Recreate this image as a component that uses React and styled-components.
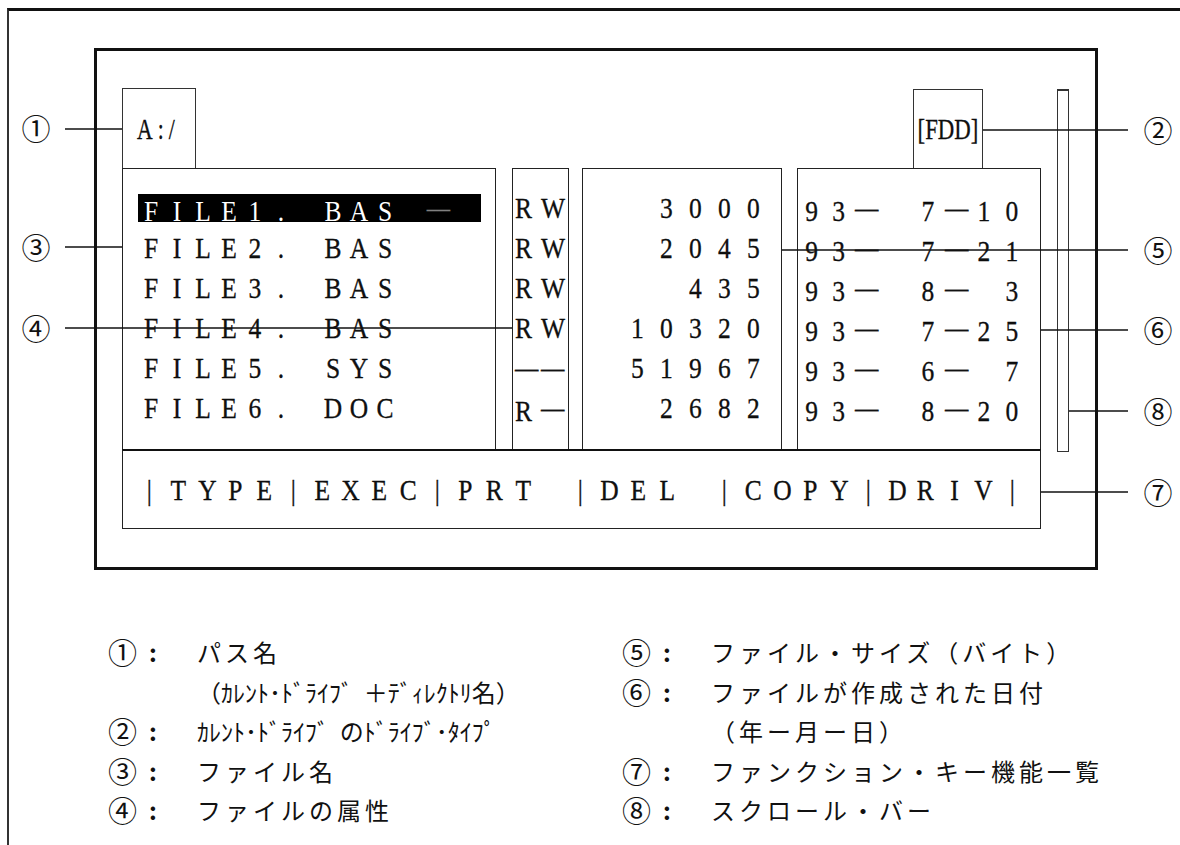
import React from 'react';
import styled, { createGlobalStyle } from 'styled-components';

const GlobalStyle = createGlobalStyle`
  html, body {
    margin: 0;
    padding: 0;
    background: #fff;
  }
  body {
    font-family: "Liberation Serif", "Times New Roman", serif;
    color: #111;
  }
`;

const Page = styled.div`
  position: relative;
  width: 1180px;
  height: 845px;
  overflow: hidden;
  background: #fff;
`;

const Frame = styled.div`
  box-sizing: border-box;
  margin: 8px 0 0 7px;
  height: 837px;
  border-top: 3px solid #111;
  border-left: 2px solid #333;
  padding: 37px 0 0 85px;
`;

const Screen = styled.div`
  box-sizing: border-box;
  width: 1004px;
  height: 522px;
  border: 3px solid #111;
  padding: 37px 0 0 25px;
  display: grid;
  grid-template-columns: 919px 12px;
  column-gap: 16px;
  align-items: start;
  -webkit-text-stroke: 0.3px #000;
`;

const Main = styled.div`
  display: flex;
  flex-direction: column;
`;

const TabRow = styled.div`
  display: flex;
  justify-content: space-between;
  align-items: flex-end;
  height: 80px;
  padding-right: 58px;
`;

const Tab = styled.div`
  box-sizing: border-box;
  width: ${(p) => p.$w}px;
  height: ${(p) => p.$h}px;
  border: 1px solid #333;
  border-bottom: none;
  display: flex;
  align-items: center;
  justify-content: ${(p) => (p.$center ? 'center' : 'flex-start')};
  padding-left: ${(p) => (p.$center ? 0 : 14)}px;
`;

const Condensed = styled.span`
  display: inline-block;
  font-size: 30px;
  line-height: 1;
  letter-spacing: ${(p) => p.$spacing || 0}px;
  transform: scaleX(${(p) => p.$scale});
  transform-origin: ${(p) => (p.$center ? 'center' : 'left')} center;
  white-space: nowrap;
`;

const PanelRow = styled.div`
  display: flex;
  height: 281px;
`;

const Panel = styled.div`
  box-sizing: border-box;
  width: ${(p) => p.$w}px;
  margin-left: ${(p) => p.$gap || 0}px;
  height: 281px;
  border: 1px solid #222;
  border-bottom: none;
  padding: 19px ${(p) => p.$pr || 0}px 0 ${(p) => p.$pl || 0}px;
  text-align: ${(p) => p.$align || 'left'};
`;

const Row = styled.div`
  height: 40px;
  line-height: 40px;
  font-size: 30px;
  white-space: nowrap;
`;

const DateRow = styled(Row)`
  display: flex;
  justify-content: space-between;
`;

const Hilite = styled.span`
  display: inline-block;
  vertical-align: top;
  margin-top: 6px;
  width: 343px;
  height: 28px;
  line-height: 28px;
  background: #000;
  color: #fff;
  -webkit-text-stroke: 0;
`;

const Ch = styled.span`
  display: inline-block;
  width: ${(p) => p.$w}px;
  text-align: ${(p) => p.$align || 'center'};
  transform: scaleX(${(p) => (p.$dash ? 0.78 : 0.85)});
  transform-origin: ${(p) => (p.$align === 'left' ? 'left' : 'center')} center;
  vertical-align: ${(p) => (p.$dash ? '3px' : 'baseline')};
  opacity: ${(p) => (p.$faint ? 0.5 : 1)};
`;

const FuncBar = styled.div`
  box-sizing: border-box;
  height: 80px;
  border: 1px solid #222;
  border-top: 2px solid #111;
  padding-left: 12px;
  line-height: 77px;
  font-size: 30px;
  white-space: nowrap;
`;

const ScrollBar = styled.div`
  box-sizing: border-box;
  margin-top: 1px;
  height: 363px;
  border: 1px solid #333;
  border-top-width: 2px;
`;

const Legend = styled.div`
  display: grid;
  grid-template-columns: 514px auto;
  margin: 62px 0 0 14px;
  font-family: "Noto Sans CJK JP", sans-serif;
  font-size: 24px;
  line-height: 39.5px;
  color: #111;
`;

const LegendItem = styled.div`
  display: flex;
  align-items: center;
  height: 39.5px;
  padding-left: ${(p) => (p.$cont ? 89 : 0)}px;
  white-space: nowrap;
`;

const Num = styled.span`
  width: 40px;
  font-size: 29px;
`;

const Colon = styled.span`
  width: 49px;
  padding-left: 1px;
  box-sizing: border-box;
  font-weight: bold;
`;

const LegendText = styled.span`
  letter-spacing: ${(p) => (p.$tight ? 0 : 4)}px;
`;

const Overlay = styled.svg`
  position: absolute;
  left: 0;
  top: 0;
  width: 1180px;
  height: 845px;
  pointer-events: none;
`;

const Callout = styled.span`
  position: absolute;
  left: ${(p) => p.$x}px;
  top: ${(p) => p.$y}px;
  transform: translate(-50%, -50%);
  font-family: "Noto Sans CJK JP", sans-serif;
  font-size: 29px;
  line-height: 1;
  color: #111;
`;

const files = [
  { name: 'FILE1. BAS', attr: 'RW', size: '3000', md: '7—10' },
  { name: 'FILE2. BAS', attr: 'RW', size: '2045', md: '7—21' },
  { name: 'FILE3. BAS', attr: 'RW', size: '435', md: '8— 3' },
  { name: 'FILE4. BAS', attr: 'RW', size: '10320', md: '7—25' },
  { name: 'FILE5. SYS', attr: '——', size: '51967', md: '6— 7' },
  { name: 'FILE6. DOC', attr: 'R—', size: '2682', md: '8—20' },
];

// leader lines: [x start, y, x end]
const leaders = [
  [65, 129, 122],
  [65, 247, 122],
  [65, 328, 512],
  [983, 130, 1128],
  [782, 250, 1128],
  [1041, 330, 1128],
  [1069, 411, 1128],
  [1041, 492, 1128],
];

const callouts = [
  ['①', 36, 127],
  ['③', 36, 246],
  ['④', 36, 327],
  ['②', 1158, 129],
  ['⑤', 1158, 249],
  ['⑥', 1158, 329],
  ['⑧', 1158, 410],
  ['⑦', 1158, 491],
];

const legendLeft = [
  { num: '①', text: 'パス名' },
  { text: '（ｶﾚﾝﾄ･ﾄﾞﾗｲﾌﾞ\u00a0\u00a0＋ﾃﾞｨﾚｸﾄﾘ名）', tight: true },
  { num: '②', text: 'ｶﾚﾝﾄ･ﾄﾞﾗｲﾌﾞ\u00a0\u00a0のﾄﾞﾗｲﾌﾞ･ﾀｲﾌﾟ', tight: true },
  { num: '③', text: 'ファイル名' },
  { num: '④', text: 'ファイルの属性' },
];

const legendRight = [
  { num: '⑤', text: 'ファイル・サイズ（バイト）' },
  { num: '⑥', text: 'ファイルが作成された日付' },
  { text: '（年ー月ー日）' },
  { num: '⑦', text: 'ファンクション・キー機能一覧' },
  { num: '⑧', text: 'スクロール・バー' },
];

const Cells = ({ text, w, align, faint }) =>
  [...text].map((c, i) => (
    <Ch key={i} $w={w} $align={align} $dash={c === '—'} $faint={faint}>
      {c === ' ' ? '\u00a0' : c}
    </Ch>
  ));

const LegendColumn = ({ items }) => (
  <div>
    {items.map((item, i) =>
      item.num ? (
        <LegendItem key={i}>
          <Num>{item.num}</Num>
          <Colon>:</Colon>
          <LegendText $tight={item.tight}>{item.text}</LegendText>
        </LegendItem>
      ) : (
        <LegendItem key={i} $cont>
          <LegendText $tight={item.tight}>{item.text}</LegendText>
        </LegendItem>
      )
    )}
  </div>
);

const App = () => {
  return (
    <Page>
      <GlobalStyle />
      <Frame>
        <Screen>
          <Main>
            <TabRow>
              <Tab $w={74} $h={80}>
                <Condensed $scale={0.72} $spacing={7}>A:/</Condensed>
              </Tab>
              <Tab $w={70} $h={79} $center>
                <Condensed $scale={0.76} $center>[FDD]</Condensed>
              </Tab>
            </TabRow>

            <PanelRow>
              <Panel $w={374} $pl={15}>
                {files.map((f, i) => (
                  <Row key={f.name}>
                    {i === 0 ? (
                      <Hilite>
                        <Cells text={f.name} w={26} />
                        <Cells text=" —" w={26} faint />
                      </Hilite>
                    ) : (
                      <Cells text={f.name} w={26} />
                    )}
                  </Row>
                ))}
              </Panel>

              <Panel $w={57} $gap={16} $pl={2}>
                {files.map((f) => (
                  <Row key={f.name}>
                    <Cells text={f.attr} w={26} align="left" />
                  </Row>
                ))}
              </Panel>

              <Panel $w={200} $gap={13} $pr={13} $align="right">
                {files.map((f) => (
                  <Row key={f.name}>
                    <Cells text={f.size} w={29} />
                  </Row>
                ))}
              </Panel>

              <Panel $w={244} $gap={15} $pr={14}>
                {files.map((f) => (
                  <DateRow key={f.name}>
                    <span>
                      <Cells text="93—" w={27} />
                    </span>
                    <span>
                      <Cells text={f.md} w={28} />
                    </span>
                  </DateRow>
                ))}
              </Panel>
            </PanelRow>

            <FuncBar>
              <Cells text="|TYPE|EXEC|PRT |DEL |COPY|DRIV|" w={28.75} />
            </FuncBar>
          </Main>

          <ScrollBar />
        </Screen>

        <Legend>
          <LegendColumn items={legendLeft} />
          <LegendColumn items={legendRight} />
        </Legend>
      </Frame>

      <Overlay viewBox="0 0 1180 845">
        {leaders.map(([x1, y, x2], i) => (
          <line key={i} x1={x1} y1={y} x2={x2} y2={y} stroke="#111" strokeWidth="1.6" />
        ))}
      </Overlay>

      {callouts.map(([label, x, y]) => (
        <Callout key={label} $x={x} $y={y}>
          {label}
        </Callout>
      ))}
    </Page>
  );
};

export default App;
